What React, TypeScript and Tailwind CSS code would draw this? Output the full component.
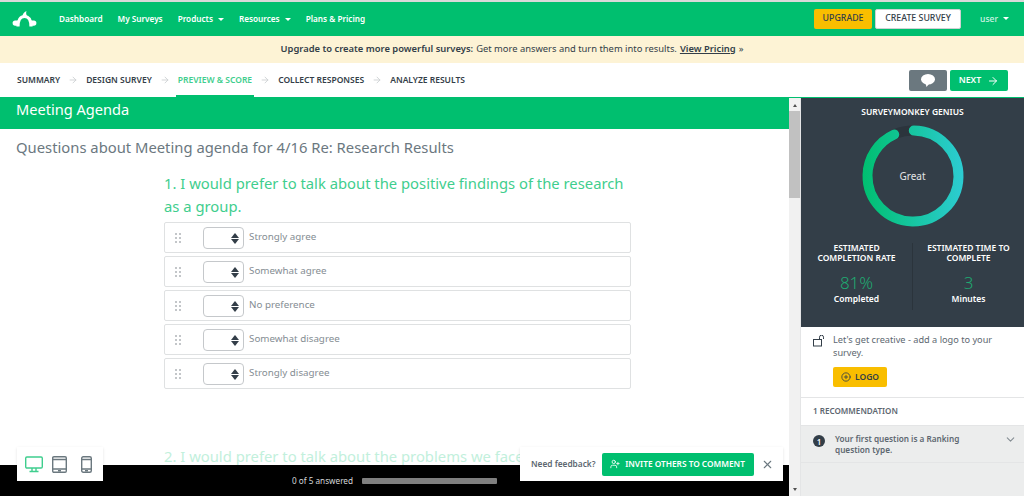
import { ArrowRight, ChevronDown, CirclePlus, X, UserPlus } from "lucide-react";

const font = "font-['Noto_Sans','Open_Sans',sans-serif]";

const steps = ["SUMMARY", "DESIGN SURVEY", "PREVIEW & SCORE", "COLLECT RESPONSES", "ANALYZE RESULTS"];
const answers = ["Strongly agree", "Somewhat agree", "No preference", "Somewhat disagree", "Strongly disagree"];

function Logo() {
  return (
    <svg width="25" height="16" viewBox="0 0 25 16" fill="none">
      <path d="M6 15.5C6 9 8.5 5.5 12.5 5.5S19 9 19 15.5" stroke="white" strokeWidth="3.2" />
      <path d="M10.5 5.5C10.5 3 12 1 14.5 0c-.6 1.8-.4 3.5 .8 5.5z" fill="white" />
      <path d="M6.5 9.5H3.2a2.6 2.6 0 0 0 0 5.2H6z" fill="white" />
      <path d="M18.5 9.5h3.3a2.6 2.6 0 0 1 0 5.2H19z" fill="white" />
    </svg>
  );
}

function Caret() {
  return <span className="inline-block ml-[5px] mb-[1px] border-x-[3px] border-t-[3px] border-x-transparent border-t-white align-middle" />;
}

function Grip() {
  return (
    <svg width="6" height="10" viewBox="0 0 6 10" fill="#c3c6c9">
      {[0, 4, 8].map((y) => (
        <g key={y}>
          <rect x="0" y={y} width="2" height="2" />
          <rect x="4" y={y} width="2" height="2" />
        </g>
      ))}
    </svg>
  );
}

function Gauge() {
  const r = 45.5;
  const c = 2 * Math.PI * r;
  return (
    <svg width="102" height="102" viewBox="0 0 102 102">
      <defs>
        {/* the arc is rotated, so the gradient is turned back to run left to right */}
        <linearGradient id="genius" gradientUnits="userSpaceOnUse" x1="0" y1="51" x2="102" y2="51" gradientTransform="rotate(89 51 51)">
          <stop offset="0" stopColor="#00bf6f" />
          <stop offset="1" stopColor="#2dccd3" />
        </linearGradient>
      </defs>
      <circle cx="51" cy="51" r={r} fill="none" stroke="#2b343c" strokeWidth="10" />
      <circle
        cx="51"
        cy="51"
        r={r}
        fill="none"
        stroke="url(#genius)"
        strokeWidth="10"
        strokeLinecap="round"
        strokeDasharray={`${c * 0.928} ${c}`}
        transform="rotate(-89 51 51)"
      />
    </svg>
  );
}

export default function App() {
  return (
    <div className={`${font} flex flex-col h-[496px] w-[1024px] overflow-hidden bg-white`}>
      <div className="h-[2px] bg-[#d9d9d9]" />

      {/* Top nav */}
      <div className="h-[34px] bg-[#00bf6f] flex items-center pl-[12px] pr-[15px] text-white">
        <Logo />
        <nav className="flex items-center gap-[15px] ml-[22px] text-[8.2px] font-semibold">
          <span>Dashboard</span>
          <span>My Surveys</span>
          <span>Products<Caret /></span>
          <span>Resources<Caret /></span>
          <span>Plans &amp; Pricing</span>
        </nav>
        <div className="ml-auto flex items-center text-[8.8px] font-medium">
          <span className="w-[58px] h-[20px] flex items-center justify-center rounded-[2px] bg-[#f9be00] text-[#333e48]">UPGRADE</span>
          <span className="w-[86px] h-[20px] ml-[3px] flex items-center justify-center rounded-[2px] bg-white border border-[#d0d2d3] text-[#333e48]">CREATE SURVEY</span>
          <span className="ml-[19px] text-[8.5px] text-[#d2f3e4]">user<Caret /></span>
        </div>
      </div>

      {/* Upgrade banner */}
      <div className="h-[27px] bg-[#fdf3d5] flex items-center justify-center text-[9.4px] text-[#333e48] pb-[1px]">
        <span className="font-semibold">Upgrade to create more powerful surveys:</span>
        <span className="ml-[3px]">Get more answers and turn them into results.</span>
        <span className="ml-[3px] font-semibold underline">View Pricing</span>
        <span className="ml-[3px]">»</span>
      </div>

      {/* Steps */}
      <div className="h-[34px] flex items-stretch pl-[17px] pr-[16px] text-[8.5px] font-semibold text-[#333e48]">
        {steps.map((s, i) => (
          <div key={s} className="flex items-center">
            <span className={`h-full flex items-center ${i === 2 ? "text-[#3fce8e] border-b-2 border-[#00bf6f] pt-[2px] px-[2px] -mx-[2px]" : ""}`}>{s}</span>
            {i < steps.length - 1 && <ArrowRight size={10} className="mx-[8px] text-[#c9cccf]" />}
          </div>
        ))}
        <div className="ml-auto flex items-center pt-[1px]">
          <span className="w-[38px] h-[21px] rounded-[2px] bg-[#6b787f] flex items-center justify-center">
            <svg width="14" height="13" viewBox="0 0 14 13" fill="white">
              <ellipse cx="7" cy="5.2" rx="7" ry="5.2" />
              <path d="M4.5 9l3.5 1-2.5 3z" />
            </svg>
          </span>
          <span className="w-[58px] h-[21px] ml-[3px] rounded-[2px] bg-[#00bf6f] text-white text-[8.8px] flex items-center justify-center gap-[6px]">
            NEXT <ArrowRight size={12} />
          </span>
        </div>
      </div>

      <div className="flex flex-1 min-h-0 border-t border-[#00bf6f]">
        {/* Survey preview */}
        <div className="relative w-[789px] overflow-hidden">
          <div className="h-[31px] bg-[#00bf6f] text-white text-[14.6px] flex items-center pl-[16px] pb-[8px]">Meeting Agenda</div>
          <div className="text-[#6b787f] text-[14.8px] leading-[22px] pl-[16px] mt-[7px]">Questions about Meeting agenda for 4/16 Re: Research Results</div>
          <div className="ml-[164px] w-[467px] mt-[14px]">
            <div className="text-[#3fce8e] text-[14.8px] leading-[23px] h-[46px] pr-[4px]">1. I would prefer to talk about the positive findings of the research as a group.</div>
            <div className="mt-[4px] flex flex-col gap-[3px]">
              {answers.map((a) => (
                <div key={a} className="h-[31px] border border-[#dfe1e2] rounded-[2px] flex items-center pl-[10px] text-[9.8px] text-[#858d93]">
                  <Grip />
                  <span className="ml-[22px] w-[41px] h-[22px] border border-[#c5c8cb] rounded-[4px] flex flex-col items-end justify-center gap-[1px] pr-[4px] mt-[1px]">
                    <span className="border-x-[4px] border-b-[5px] border-x-transparent border-b-[#333e48]" />
                    <span className="border-x-[4px] border-t-[5px] border-x-transparent border-t-[#333e48]" />
                  </span>
                  <span className="ml-[5px] pb-[1px]">{a}</span>
                </div>
              ))}
            </div>
            <div className="text-[#c2f0dc] text-[14.8px] leading-[23px] mt-[56px] whitespace-nowrap">2. I would prefer to talk about the problems we face</div>
          </div>

          {/* Progress footer */}
          <div className="absolute left-0 right-0 bottom-0 h-[31px] bg-black flex items-center text-[8.2px] text-[#d5d8da]">
            <span className="ml-[292px] pt-[1px]">0 of 5 answered</span>
            <span className="ml-[9px] w-[135px] h-[6px] mt-[1px] rounded-[1px] bg-[#7f7f7f]" />
          </div>

          {/* Device switcher */}
          <div className="absolute left-[17px] bottom-[15px] w-[86px] h-[34px] bg-white shadow-sm flex items-center pl-[8px]">
            <svg width="18" height="17" viewBox="0 0 18 17" fill="none" stroke="#3fce8e" strokeWidth="1.4">
              <rect x="0.7" y="1" width="16.6" height="11" rx="1.2" />
              <path d="M7 12v3M11 12v3M4.5 15.5h9" />
            </svg>
            <svg className="ml-[9px]" width="15" height="17" viewBox="0 0 15 17" fill="none" stroke="#6b787f" strokeWidth="1.4">
              <rect x="0.7" y="0.7" width="13.6" height="15.6" rx="1.2" />
              <path d="M0.7 3.5h13.6M0.7 13h13.6M6 14.8h3" />
            </svg>
            <svg className="ml-[14px]" width="11" height="17" viewBox="0 0 11 17" fill="none" stroke="#6b787f" strokeWidth="1.4">
              <rect x="0.7" y="0.7" width="9.6" height="15.6" rx="1.5" />
              <path d="M0.7 3.5h9.6M0.7 13h9.6M4 14.8h3" />
            </svg>
          </div>

          {/* Feedback prompt */}
          <div className="absolute left-[520px] bottom-[15px] w-[263px] h-[34px] bg-white shadow-sm flex items-center pl-[11px] text-[8.3px] font-semibold">
            <span className="text-[#5d6770]">Need feedback?</span>
            <span className="ml-[6px] w-[152px] h-[23px] rounded-[2px] bg-[#00bf6f] text-white flex items-center justify-center gap-[5px]">
              <UserPlus size={10} />
              INVITE OTHERS TO COMMENT
            </span>
            <X size={13} className="ml-[7px] text-[#6b787f]" />
          </div>
        </div>

        {/* Scrollbar */}
        <div className="w-[11px] bg-[#f1f1f1] flex flex-col items-center">
          <span className="mt-[6px] border-x-[2.5px] border-b-[3px] border-x-transparent border-b-[#505050]" />
          <span className="mt-[4px] w-full h-[87px] bg-[#c1c1c1]" />
          <span className="mt-auto mb-[5px] border-x-[2.5px] border-t-[3px] border-x-transparent border-t-[#505050]" />
        </div>

        {/* Genius panel */}
        <div className="flex-1 flex flex-col border-l border-[#e4e5e6] bg-[#eceded]">
          <div className="h-[229px] bg-[#333e48] text-white flex flex-col items-center pt-[8px]">
            <div className="text-[8.5px] font-semibold leading-[11px]">SURVEYMONKEY GENIUS</div>
            <div className="relative mt-[8px] w-[102px] h-[102px]">
              <Gauge />
              <span className="absolute inset-0 flex items-center justify-center text-[10px] text-[#e4e6e7]">Great</span>
            </div>
            <div className="flex w-full mt-[16px] text-center text-[8.5px] font-semibold leading-[10px]">
              <div className="w-[111px]">
                <div>ESTIMATED</div>
                <div>COMPLETION RATE</div>
                <div className="text-[#1fa971] text-[17px] font-light leading-[20px] mt-[10px]">81%</div>
                <div className="mt-[1px]">Completed</div>
              </div>
              <div className="flex-1 border-l border-[#2b343c] h-[67px]">
                <div>ESTIMATED TIME TO</div>
                <div>COMPLETE</div>
                <div className="text-[#1fa971] text-[17px] font-light leading-[20px] mt-[10px]">3</div>
                <div className="mt-[1px]">Minutes</div>
              </div>
            </div>
          </div>

          <div className="h-[71px] bg-white border-b border-[#e4e5e6] flex pl-[12px] pt-[7px]">
            <svg width="12" height="12" viewBox="0 0 12 12" fill="none" stroke="#333e48" strokeWidth="1" className="mt-[1px]">
              <rect x="0.5" y="4.5" width="8" height="6.5" />
              <path d="M6.5 4.5V2.2a2 2 0 0 1 4 0V4" />
            </svg>
            <div className="ml-[8px] w-[180px]">
              <div className="text-[9.2px] leading-[12.5px] text-[#5d6770]">Let's get creative - add a logo to your survey.</div>
              <span className="mt-[8px] w-[54px] h-[20px] rounded-[2px] bg-[#f9be00] text-[#333e48] text-[8.5px] font-semibold flex items-center justify-center gap-[4px]">
                <CirclePlus size={10} />
                LOGO
              </span>
            </div>
          </div>

          <div className="h-[27px] bg-white flex items-center pl-[12px] text-[8.1px] font-semibold text-[#5d6770]">1 RECOMMENDATION</div>

          <div className="h-[38px] border-y border-[#e4e5e6] flex pl-[12px] pr-[7px] pt-[7px] text-[8.2px] font-semibold leading-[11px] text-[#5d6770]">
            <span className="w-[12px] h-[12px] mt-[2px] rounded-full bg-[#333e48] text-white text-[8px] flex items-center justify-center">1</span>
            <div className="ml-[10px] w-[140px]">Your first question is a Ranking question type.</div>
            <ChevronDown size={13} className="ml-auto text-[#858d93]" />
          </div>
        </div>
      </div>
    </div>
  );
}
